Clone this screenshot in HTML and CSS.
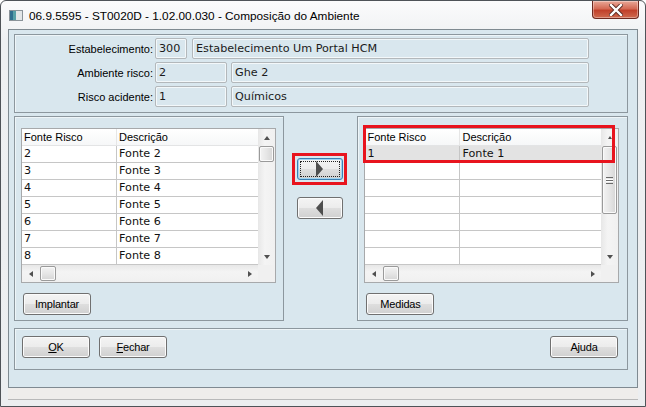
FILE: index.html
```html
<!DOCTYPE html>
<html>
<head>
    <title>Composição do Ambiente</title>
    <link rel="stylesheet" href="styles.css">
</head>
<body>
    <div class="window">
        <div class="titlebar">
            <svg class="app-icon" width="14" height="11" viewBox="0 0 14 11">
                <rect x="0.5" y="0.5" width="13" height="10" fill="#f4f6f7" stroke="#8a9399"/>
                <rect x="1" y="1" width="3" height="9" fill="#2f6f8f"/>
                <rect x="4" y="1" width="3" height="9" fill="#57a0a8"/>
                <rect x="7" y="1" width="6" height="9" fill="#e2e6e8"/>
            </svg>
            <span class="title">06.9.5595 - ST0020D - 1.02.00.030 - Composição do Ambiente</span>
            <div class="close-btn">
                <svg width="14" height="12" viewBox="0 0 14 12">
                    <path d="M2 1 L12 11 M12 1 L2 11" stroke="#5a2a22" stroke-width="4.2" stroke-linecap="square"/>
                    <path d="M2 1 L12 11 M12 1 L2 11" stroke="#ffffff" stroke-width="2.4" stroke-linecap="square"/>
                </svg>
            </div>
        </div>

        <div class="client">
            <div class="group header-group">
                <div class="field-row">
                    <span class="field-label">Estabelecimento:</span>
                    <div class="field code-short">300</div>
                    <div class="field desc-long">Estabelecimento Um Portal HCM</div>
                </div>
                <div class="field-row">
                    <span class="field-label">Ambiente risco:</span>
                    <div class="field code-wide">2</div>
                    <div class="field desc-short">Ghe 2</div>
                </div>
                <div class="field-row">
                    <span class="field-label">Risco acidente:</span>
                    <div class="field code-wide">1</div>
                    <div class="field desc-short">Químicos</div>
                </div>
            </div>

            <div class="middle">
                <div class="group list-group">
                    <div class="grid">
                        <div class="grid-table">
                            <div class="grid-row grid-head">
                                <div class="cell">Fonte Risco</div>
                                <div class="cell">Descrição</div>
                            </div>
                            <div class="grid-row"><div class="cell">2</div><div class="cell">Fonte 2</div></div>
                            <div class="grid-row"><div class="cell">3</div><div class="cell">Fonte 3</div></div>
                            <div class="grid-row"><div class="cell">4</div><div class="cell">Fonte 4</div></div>
                            <div class="grid-row"><div class="cell">5</div><div class="cell">Fonte 5</div></div>
                            <div class="grid-row"><div class="cell">6</div><div class="cell">Fonte 6</div></div>
                            <div class="grid-row"><div class="cell">7</div><div class="cell">Fonte 7</div></div>
                            <div class="grid-row"><div class="cell">8</div><div class="cell">Fonte 8</div></div>
                        </div>
                        <div class="vscroll">
                            <div class="sb-btn"><span class="tri-up"></span></div>
                            <div class="vthumb"></div>
                            <div class="sb-track"></div>
                            <div class="sb-btn"><span class="tri-down"></span></div>
                        </div>
                        <div class="hscroll">
                            <div class="sb-btn"><span class="tri-left"></span></div>
                            <div class="hthumb"></div>
                            <div class="sb-track"></div>
                            <div class="sb-btn"><span class="tri-right"></span></div>
                        </div>
                        <div class="corner"></div>
                    </div>
                    <button class="btn list-btn">Implantar</button>
                </div>

                <div class="move-buttons">
                    <button class="btn move-btn focused"><span class="focus-rect"><span class="arrow-right"></span></span></button>
                    <button class="btn move-btn"><span class="arrow-left"></span></button>
                </div>

                <div class="group list-group right-list">
                    <div class="grid">
                        <div class="grid-table">
                            <div class="grid-row grid-head">
                                <div class="cell">Fonte Risco</div>
                                <div class="cell">Descrição</div>
                            </div>
                            <div class="grid-row selected"><div class="cell">1</div><div class="cell">Fonte 1</div></div>
                            <div class="grid-row"><div class="cell"></div><div class="cell"></div></div>
                            <div class="grid-row"><div class="cell"></div><div class="cell"></div></div>
                            <div class="grid-row"><div class="cell"></div><div class="cell"></div></div>
                            <div class="grid-row"><div class="cell"></div><div class="cell"></div></div>
                            <div class="grid-row"><div class="cell"></div><div class="cell"></div></div>
                            <div class="grid-row"><div class="cell"></div><div class="cell"></div></div>
                        </div>
                        <div class="vscroll">
                            <div class="sb-btn"><span class="tri-up small"></span></div>
                            <div class="vthumb long"><span class="grip"></span></div>
                            <div class="sb-track"></div>
                            <div class="sb-btn"><span class="tri-down"></span></div>
                        </div>
                        <div class="hscroll">
                            <div class="sb-btn"><span class="tri-left"></span></div>
                            <div class="hthumb"></div>
                            <div class="sb-track"></div>
                            <div class="sb-btn"><span class="tri-right"></span></div>
                        </div>
                        <div class="corner"></div>
                    </div>
                    <button class="btn list-btn">Medidas</button>
                </div>
            </div>

            <div class="group footer-group">
                <button class="btn"><u>O</u>K</button>
                <button class="btn"><u>F</u>echar</button>
                <button class="btn push-right">Ajuda</button>
            </div>
        </div>
        <div class="statusbar"></div>

        <!-- highlight marks drawn over the dialog -->
        <div class="mark mark-button"></div>
        <div class="mark mark-row"></div>
    </div>
</body>
</html>
```

FILE: styles.css
```css
html, body {
    margin: 0;
    padding: 0;
    background: #ffffff;
}
.window {
    position: relative;
    width: 646px;
    height: 407px;
    box-sizing: border-box;
    border: 1px solid #4f5358;
    border-radius: 6px 6px 0 0;
    padding: 0 7px 6px 7px;
    background: linear-gradient(#fbfbfc, #eef0f2 40px, #eceef0);
    font-family: "Liberation Sans", Arial, sans-serif;
}
.titlebar {
    height: 28px;
    display: flex;
    align-items: flex-start;
}
.app-icon {
    margin: 9px 0 0 1px;
}
.title {
    margin: 8px 0 0 6px;
    font-size: 11.8px;
    line-height: 14px;
    color: #000;
}
.close-btn {
    margin-left: auto;
    margin-right: -1px;
    width: 47px;
    height: 18px;
    box-sizing: border-box;
    border: 1px solid #6e2a20;
    border-top: none;
    border-radius: 0 0 4px 4px;
    background: linear-gradient(#e9a898, #d46a55 45%, #c1412b 55%, #cf6a4f);
    display: flex;
    align-items: center;
    justify-content: center;
    box-shadow: inset 0 0 0 1px rgba(255, 255, 255, 0.35);
}
.client {
    height: 359px;
    box-sizing: border-box;
    border: 1px solid #7f8a91;
    background: #d9e7ee;
    padding: 4px 9px 0 5px;
}
.statusbar {
    height: 11px;
    background: #efedeb;
    border-bottom: 1px solid #b9b9b9;
}

/* group boxes */
.group {
    box-sizing: border-box;
    border: 1px solid #8c979e;
    box-shadow: inset 1px 1px 0 #eef5f8;
}
.header-group {
    height: 79px;
    padding: 3px 0 0 0;
}
.field-row {
    display: flex;
    align-items: center;
    height: 21px;
    margin-bottom: 3px;
}
.field-label {
    width: 138px;
    margin-right: 2px;
    text-align: right;
    font-size: 11px;
    color: #000;
}
.field {
    box-sizing: border-box;
    height: 21px;
    border: 1px solid #b3b8bb;
    border-radius: 2px;
    box-shadow: inset 0 0 0 1px #f3f8fa;
    background: #d9e7ee;
    padding-left: 3px;
    font-family: "DejaVu Sans", Verdana, sans-serif;
    font-size: 11.2px;
    line-height: 19px;
    color: #1b1b1b;
    white-space: nowrap;
}
.code-short { width: 32px; }
.code-wide { width: 72px; }
.desc-long { width: 397px; margin-left: 5px; }
.desc-short { width: 358px; margin-left: 4px; }

.middle {
    display: flex;
    margin-top: 3px;
    height: 205px;
}
.list-group {
    width: 270px;
    padding: 11px 0 0 6px;
}
.right-list {
    width: 271px;
}
.move-buttons {
    width: 74px;
    display: flex;
    flex-direction: column;
    align-items: flex-start;
    padding: 42px 0 0 13px;
    box-sizing: border-box;
}

/* grids */
.grid {
    width: 255px;
    height: 155px;
    box-sizing: border-box;
    border: 1px solid #a7a9ab;
    background: #fff;
    display: grid;
    grid-template-columns: 236px 17px;
    grid-template-rows: 136px 17px;
}
.grid-row {
    display: grid;
    grid-template-columns: 95px 141px;
    height: 17px;
    box-sizing: border-box;
    border-bottom: 1px solid #c6c6c6;
}
.cell {
    padding-left: 2px;
    font-family: "DejaVu Sans", Verdana, sans-serif;
    font-size: 11.2px;
    line-height: 16px;
    color: #111;
    white-space: nowrap;
    overflow: hidden;
}
.cell:first-child {
    border-right: 1px solid #c6c6c6;
}
.grid-head {
    background: linear-gradient(#ffffff, #f6f7f8);
    border-bottom: 1px solid #e3e4e5;
}
.grid-head .cell {
    font-family: "Liberation Sans", Arial, sans-serif;
    font-size: 11px;
    color: #000;
}
.grid-head .cell:first-child {
    border-right: 1px solid #e6e6e6;
}
.grid-row.selected {
    background: #e3e3e3;
}

/* scrollbars */
.vscroll {
    display: flex;
    flex-direction: column;
    background: linear-gradient(90deg, #e7e7e7, #f4f4f4 40%, #f0f0f0);
}
.hscroll {
    display: flex;
    background: linear-gradient(#e7e7e7, #f4f4f4 40%, #f0f0f0);
}
.corner {
    background: #f0f0f0;
}
.sb-btn {
    width: 17px;
    height: 17px;
    display: flex;
    align-items: center;
    justify-content: center;
    flex-shrink: 0;
}
.sb-track {
    flex: 1;
}
.vthumb {
    margin-left: 1px;
    width: 15px;
    height: 16px;
    box-sizing: border-box;
    border: 1px solid #9a9a9a;
    border-radius: 2px;
    background: linear-gradient(90deg, #f3f3f3, #e6e6e6 50%, #d6d6d6);
    box-shadow: inset 0 0 0 1px #fafafa;
}
.vthumb.long {
    height: 68px;
    display: flex;
    align-items: center;
    justify-content: center;
}
.grip {
    width: 7px;
    height: 5px;
    border-top: 1px solid #6a6a6a;
    border-bottom: 1px solid #6a6a6a;
    background: linear-gradient(#fff 0 1px, #6a6a6a 1px 2px, #fff 2px 3px, transparent 3px);
    background-size: 7px 5px;
    background-repeat: no-repeat;
    background-position: 0 1px;
}
.hthumb {
    margin: 1px 0 0 1px;
    width: 16px;
    height: 15px;
    box-sizing: border-box;
    border: 1px solid #9a9a9a;
    border-radius: 2px;
    background: linear-gradient(#f3f3f3, #e6e6e6 50%, #d6d6d6);
    box-shadow: inset 0 0 0 1px #fafafa;
}
.tri-up, .tri-down, .tri-left, .tri-right {
    width: 0;
    height: 0;
    border-style: solid;
    border-color: transparent;
}
.tri-up {
    border-width: 0 3.5px 4px 3.5px;
    border-bottom-color: #505050;
}
.tri-up.small {
    border-width: 0 2.5px 3px 2.5px;
}
.tri-down {
    border-width: 4px 3.5px 0 3.5px;
    border-top-color: #505050;
}
.tri-left {
    border-width: 3.5px 4px 3.5px 0;
    border-right-color: #505050;
}
.tri-right {
    border-width: 3.5px 0 3.5px 4px;
    border-left-color: #505050;
}

/* buttons */
.btn {
    width: 68px;
    height: 22px;
    box-sizing: border-box;
    border: 1px solid #707070;
    border-radius: 3px;
    background: linear-gradient(#f4f4f4, #ececec 48%, #dedede 52%, #d0d0d0);
    box-shadow: inset 0 0 0 1px #fbfbfb;
    font-family: "Liberation Sans", Arial, sans-serif;
    font-size: 11px;
    letter-spacing: -0.2px;
    color: #000;
    padding: 0;
    margin: 0;
}
.list-btn {
    margin: 10px 0 0 2px;
}
.move-btn {
    width: 46px;
    display: flex;
    align-items: center;
    justify-content: center;
}
.move-btn + .move-btn {
    margin-top: 17px;
}
.move-btn.focused {
    border-color: #3c7fb1;
    box-shadow: inset 0 0 0 1px #9fd4f2;
}
.focus-rect {
    width: 40px;
    height: 16px;
    border: 1px dotted #222;
    box-sizing: border-box;
    display: flex;
    align-items: center;
    justify-content: center;
}
.arrow-right {
    width: 0;
    height: 0;
    border-style: solid;
    border-color: transparent;
    border-width: 8px 0 8px 7px;
    border-left-color: #4e4e4e;
}
.arrow-left {
    width: 0;
    height: 0;
    border-style: solid;
    border-color: transparent;
    border-width: 8px 7px 8px 0;
    border-right-color: #4e4e4e;
}

.footer-group {
    display: flex;
    gap: 9px;
    margin-top: 7px;
    height: 42px;
    padding: 7px 9px 0 7px;
}
.push-right {
    margin-left: auto;
}

/* red highlight marks over the dialog */
.mark {
    position: absolute;
    box-sizing: border-box;
    border: 3px solid #e8141e;
}
.mark-button {
    left: 291px;
    top: 152px;
    width: 55px;
    height: 32px;
}
.mark-row {
    left: 362px;
    top: 124px;
    width: 252px;
    height: 38px;
}
```
